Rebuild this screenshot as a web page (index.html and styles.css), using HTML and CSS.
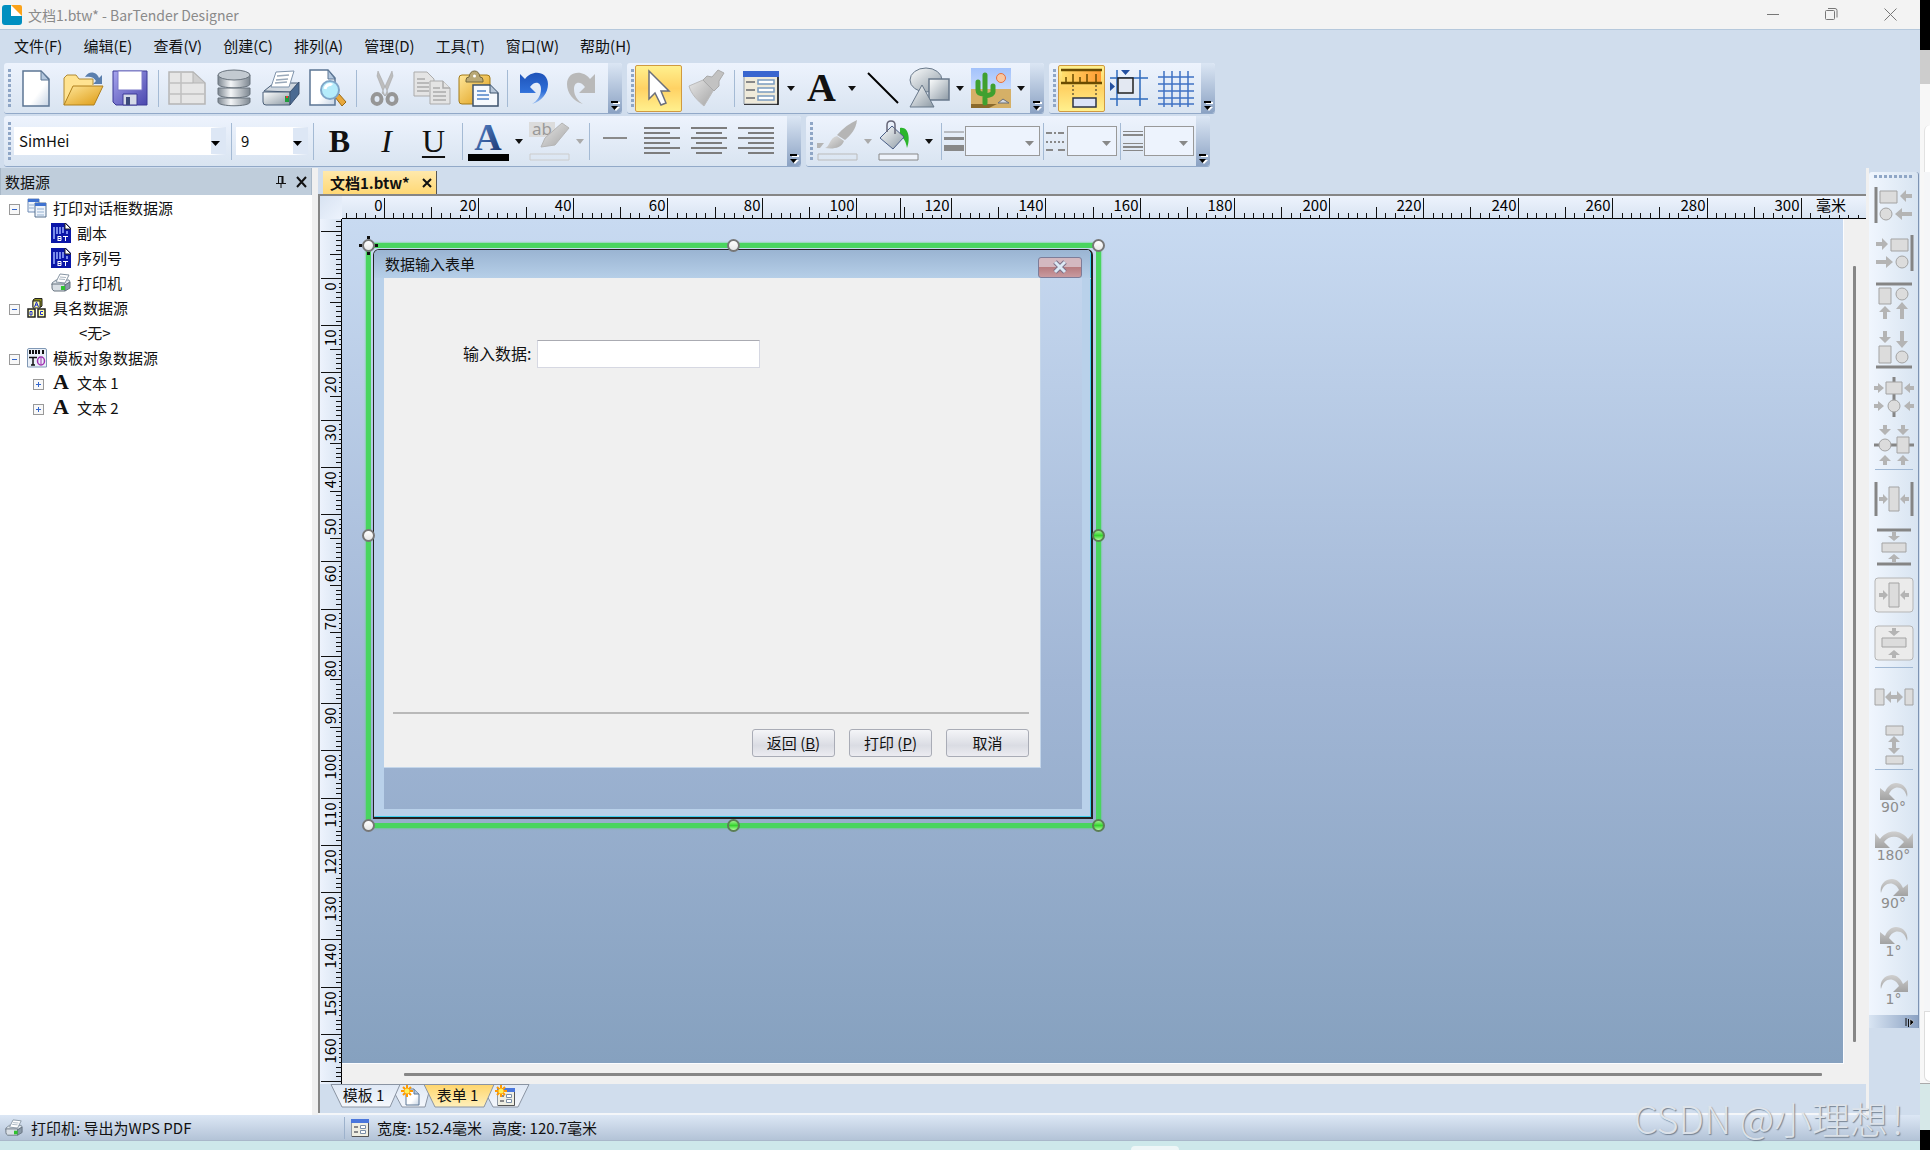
FILE: index.html
```html
<!DOCTYPE html>
<html lang="zh-CN">
<head>
<meta charset="utf-8">
<title>文档1.btw* - BarTender Designer</title>
<link rel="stylesheet" href="styles.css">
</head>
<body>
<svg class="defs" aria-hidden="true">
  <defs>
    <linearGradient id="g-steel" x1="0" y1="0" x2="1" y2="1"><stop offset="0" stop-color="#fdfefe"/><stop offset="1" stop-color="#8d9aa5"/></linearGradient>
    <linearGradient id="g-steelh"><stop offset="0" stop-color="#7d8791"/><stop offset=".4" stop-color="#f4f6f8"/><stop offset="1" stop-color="#7d8791"/></linearGradient>
    <linearGradient id="g-page" x1="0" y1="0" x2="1" y2="1"><stop offset="0" stop-color="#fff"/><stop offset=".6" stop-color="#fff"/><stop offset="1" stop-color="#c5d3e4"/></linearGradient>
    <linearGradient id="g-gold" x1="0" y1="0" x2="1" y2="1"><stop offset="0" stop-color="#ffe79a"/><stop offset="1" stop-color="#dd9a12"/></linearGradient>
    <linearGradient id="g-grey" x1="0" y1="0" x2="1" y2="1"><stop offset="0" stop-color="#e6e6e6"/><stop offset="1" stop-color="#a6a6a6"/></linearGradient>
    <linearGradient id="g-rot" x1="0" y1="0" x2="0" y2="1"><stop offset="0" stop-color="#cfcfcf"/><stop offset="1" stop-color="#a2a2a2"/></linearGradient>
    <linearGradient id="g-blue" x1="0" y1="0" x2="0" y2="1"><stop offset="0" stop-color="#1d52b8"/><stop offset=".6" stop-color="#2f6fd8"/><stop offset="1" stop-color="#9cc0f2"/></linearGradient>
    <linearGradient id="g-violet" x1="0" y1="0" x2="1" y2="1"><stop offset="0" stop-color="#a7a5ee"/><stop offset="1" stop-color="#4a47ae"/></linearGradient>
    <linearGradient id="g-letter" x1="0" y1="0" x2="1" y2="1"><stop offset="0" stop-color="#5f8fd8"/><stop offset="1" stop-color="#142f66"/></linearGradient>
    <linearGradient id="g-ruler"><stop offset="0" stop-color="#ffdf6c"/><stop offset="1" stop-color="#ff9a32"/></linearGradient>
    <linearGradient id="g-tab" x1="0" y1="0" x2="0" y2="1"><stop offset="0" stop-color="#dfe8f5"/><stop offset="1" stop-color="#f4f7fc"/></linearGradient>
    <linearGradient id="g-tabon" x1="0" y1="0" x2="0" y2="1"><stop offset="0" stop-color="#ffd56c"/><stop offset="1" stop-color="#fff0bb"/></linearGradient>
    <linearGradient id="g-sky" x1="0" y1="0" x2="0" y2="1"><stop offset="0" stop-color="#a3c2fb"/><stop offset="1" stop-color="#e5eefe"/></linearGradient>
    <symbol id="caret" viewBox="0 0 8 5"><path d="M0 0h8L4 5z" fill="currentColor"/></symbol>
    <symbol id="more" viewBox="0 0 10 10"><path d="M3 2h7M3 2h7" stroke="#fff" stroke-width="2"/><path d="M1 1h7" stroke="#000" stroke-width="2"/><path d="M2 6h8l-4 4z" fill="#fff"/><path d="M1 5h7L4.500 9z"/></symbol>
    <symbol id="printer" viewBox="0 0 38 38"><path d="M2 22 12 14h24l-7 9z" fill="#cfd6de" stroke="#4b5f78"/><path d="M9 18 14 3l18-1-5 16z" fill="#fff" stroke="#7f93ab"/><path d="M15 7l12-1M14 11l12-1M13 14l12-1" stroke="#9aa9ba" stroke-width="1.500"/><path d="M1 23h27v13H4q-3 0-3-3z" fill="url(#g-steel)" stroke="#4b5f78"/><path d="M28 23l9-10v12l-9 11z" fill="#4a6a92" stroke="#3c5270"/><path d="M23 27h4v6h-4z" fill="#1f9c3c"/><path d="M24 27h2v2h-2z" fill="#e33"/></symbol>
    <symbol id="printer-small" viewBox="0 0 20 20"><path d="M1 10l4-3h13l1 2-5 3H1z" fill="#dfe5ea" stroke="#7d8b98"/><path d="M5 9l4-8 9 1-4 8z" fill="#fff" stroke="#8795a3"/><path d="M9 4l6 .5M8 6l6 .5" stroke="#a9b5c1"/><path d="M1 11h13v7H3q-2-1-2-3z" fill="#d9dfe5" stroke="#66737f"/><path d="M14 12l5-3v6l-5 3z" fill="#8a99a8" stroke="#66737f"/><path d="M10 13h4v4h-4z" fill="#2fc32f"/></symbol>
    <symbol id="form" viewBox="0 0 36 34"><path d="M1 1h34v32H1z" fill="#efeada" stroke="#8f98a4"/><path d="M0 0h36v6H0z" fill="#3a66cf"/><path d="M35 6v28H1" fill="none" stroke="#111" stroke-width="1.500"/><g fill="#fff" stroke="#7b9cc0" stroke-width="1.500"><path d="M15 9h16v4H15zM15 17h16v4H15zM15 25h16v4H15z"/></g><path d="M3 11h9M3 19h9M3 27h9" stroke="#888" stroke-width="2"/></symbol>
    <symbol id="form-small" viewBox="0 0 18 18"><path d="M.5.5h17v17H.5z" fill="#efeee2" stroke="#8f98a4"/><path d="M0 0h18v4H0z" fill="#4a76dc"/><path d="M17.500 4v13.500H1" fill="none" stroke="#555"/><path d="M9.500 6.500h5v3h-5zM9.500 11.500h5v3h-5z" fill="#fff" stroke="#7b8fa8"/><path d="M3 8h4M3 13h4" stroke="#888" stroke-width="2"/></symbol>
    <symbol id="barcode" viewBox="0 0 20 20"><path d="M0 0h15l5 5v15H0z" fill="#0a16a8"/><path d="M14 0l6 6h-6z" fill="#fff" stroke="#222"/><path d="M3 4v12M6 4v7M9 4v7M12 4v6M16 8v3" stroke="#9fb2ff" stroke-width="1.500"/><path d="M7 13v5M7 13.500h3v4H7M7 15.500h3M12 13.500h5M14.500 13v5" stroke="#fff" fill="none"/></symbol>
    <symbol id="rot" viewBox="0 0 28 17"><path d="M0 5v12h15l-6-6C13 2 24 2 27 14 29 5 22 0 16 0 11 0 7 4 5 9z" fill="url(#g-rot)"/></symbol>
    <symbol id="spark" viewBox="0 0 12 12"><path d="M6 0v12M0 6h12M2 2l8 8M10 2l-8 8" stroke="#ff9a00" stroke-width="2"/><circle cx="6" cy="6" r="2.500" fill="#fff15a"/></symbol>
  </defs>
</svg>

<div class="app">
  <header class="titlebar">
    <svg class="logo" viewBox="0 0 20 20" width="20" height="20"><path d="M3 0h6v11h11v6q0 3-3 3H3q-3 0-3-3V3q0-3 3-3z" fill="#008fc0"/><path d="M9 0v11h11z" fill="#fff"/><path d="M9 0h9q2 0 2 2v9z" fill="#fba31a"/></svg>
    <h1>文档1.btw* - BarTender Designer</h1>
    <div class="winbuttons">
      <button aria-label="最小化"><svg width="12" height="12"><path d="M0 5.500h12" stroke="#777"/></svg></button>
      <button aria-label="还原"><svg width="13" height="13" fill="none" stroke="#777"><rect x=".5" y="2.500" width="9" height="9" rx="1"/><path d="M3 .5h7q2 0 2 2v7"/></svg></button>
      <button aria-label="关闭"><svg width="13" height="13"><path d="M.5.5l12 12M12.500.5l-12 12" stroke="#777"/></svg></button>
    </div>
  </header>

  <nav class="menubar">
    <button>文件(F)</button><button>编辑(E)</button><button>查看(V)</button><button>创建(C)</button><button>排列(A)</button><button>管理(D)</button><button>工具(T)</button><button>窗口(W)</button><button>帮助(H)</button>
  </nav>

  <div class="toolbars">
    <div class="toolrow">
      <div class="toolband">
        <i class="grip"></i>
        <button class="tool" aria-label="新建"><svg width="30" height="37"><path d="M2 1h18l8 8v27H2z" fill="url(#g-page)" stroke="#5c7694" stroke-width="1.500"/><path d="M20 1v9h8z" fill="#b4c8df" stroke="#5c7694"/></svg></button>
        <button class="tool" aria-label="打开"><svg width="42" height="37"><path d="M23 7c4-7 12-5 14 1l3-3v9h-9l3-3c-2-4-6-5-11-4z" fill="#5a7fae"/><path d="M2 35V8l3-3h9l3 4h14v6" fill="#ffe391" stroke="#b08a35"/><path d="M2 35 11 16h30L32 35z" fill="url(#g-gold)" stroke="#b0801c"/></svg></button>
        <button class="tool" aria-label="保存"><svg width="36" height="36"><path d="M1 1h34v34H4l-3-3z" fill="url(#g-violet)" stroke="#3c3a96"/><path d="M6 1h24v19H6z" fill="#fff" stroke="#7a78c8"/><path d="M11 24h14v11H11z" fill="#d5dae8" stroke="#3c3a96"/><path d="M14 27h4v8h-4z" fill="#3c4a7a"/></svg></button>
        <i class="sep"></i>
        <button class="tool" aria-label="页面设置"><svg width="38" height="36"><path d="M1 2h24l12 11v21H1z" fill="#e6e6e6" stroke="#b5b5b5" stroke-width="1.500"/><path d="M1 13h24M1 24h36M13 2v32" stroke="#c0c0c0" stroke-width="1.500"/><path d="M25 2v11h12z" fill="#cfcfcf" stroke="#b5b5b5"/></svg></button>
        <button class="tool" aria-label="数据库"><svg width="34" height="38" fill="url(#g-steelh)" stroke="#69737d"><path d="M1 29v4c0 5 32 5 32 0v-4zM1 19v6c0 5 32 5 32 0v-6z"/><path d="M1 6v9c0 5 32 5 32 0V6z"/><ellipse cx="17" cy="6" rx="16" ry="5" fill="#c3cad1"/></svg></button>
        <button class="tool" aria-label="打印"><svg width="38" height="38"><use href="#printer"/></svg></button>
        <button class="tool" aria-label="打印预览"><svg width="39" height="38"><path d="M2 1h18l7 8v27H2z" fill="url(#g-page)" stroke="#5c7694" stroke-width="1.500"/><path d="M20 1v9h7z" fill="#b4c8df" stroke="#5c7694"/><path d="M27 28l4-3 7 8-4 4z" fill="#e8a83c" stroke="#9c6a14"/><circle cx="22" cy="21" r="9" fill="#b5ecfb" stroke="#7fa6c8" stroke-width="2"/><path d="M17 20c1-5 6-5 7-4" stroke="#fff" stroke-width="3" fill="none"/></svg></button>
        <i class="sep"></i>
        <button class="tool" aria-label="剪切"><svg width="30" height="36"><path d="M8 1l10 22-3 3L7 6zM22 1L12 23l3 3 8-20z" fill="#bdbdbd" stroke="#a0a0a0" stroke-width=".5"/><g fill="none" stroke="#969696" stroke-width="4"><ellipse cx="7" cy="29" rx="4.500" ry="5"/><ellipse cx="22" cy="29" rx="4.500" ry="5"/></g></svg></button>
        <button class="tool" aria-label="复制"><svg width="38" height="34" fill="#e4e4e4" stroke="#ababab"><path d="M1 1h13l7 7v17H1z"/><path d="M4 8h8M4 12h12M4 16h12M4 20h12" stroke-width="1.500"/><path d="M17 10h13l7 7v16H17z"/><path d="M30 10v7h7M20 17h7M20 21h13M20 25h13M20 29h13" stroke-width="1.500"/></svg></button>
        <button class="tool" aria-label="粘贴"><svg width="41" height="37"><rect x="1" y="5" width="31" height="29" rx="3" fill="url(#g-gold)" stroke="#a27a19"/><path d="M8 10q0-3 3-3 1-6 5.500-6T22 7q3 0 3 3v2H8z" fill="#b9a875" stroke="#75683b"/><circle cx="16.500" cy="6" r="1.500" fill="#fff"/><path d="M15 15h17l8 8v13H15z" fill="#f6f9fd" stroke="#3d526c" stroke-width="1.500"/><path d="M32 15v8h8" fill="#b7c6d8" stroke="#3d526c"/><path d="M19 21h9M19 25h12M19 29h12" stroke="#4f83c8" stroke-width="1.500"/></svg></button>
        <i class="sep sep-tight"></i>
        <button class="tool" aria-label="撤消"><svg width="32" height="34"><path d="M2 3v19h16l-6-6c4-6 11-6 11 2 0 7-4 12-9 15 10-3 16-11 16-20C30 0 14-2 7 8z" fill="url(#g-blue)"/></svg></button>
        <button class="tool" aria-label="恢复"><svg width="32" height="34"><path d="M30 3v19H14l6-6C16 10 9 10 9 18c0 7 4 12 9 15C8 30 2 22 2 13 2 0 18-2 25 8z" fill="#b9b9b9"/></svg></button>
        <button class="overflow overflow-gap" aria-label="更多"><svg width="10" height="10"><use href="#more"/></svg></button>
      </div>
      <div class="toolband">
        <i class="grip"></i>
        <button class="tool on" aria-label="选择"><svg width="24" height="40"><path d="M2 3v28l6-6 6 12 5-2-5-12h8z" fill="#fff" stroke="#6b6f7c" stroke-width="1.500"/></svg></button>
        <button class="tool" aria-label="格式刷"><svg width="36" height="38"><path d="M1 17l14-6 10 11-9 15C10 32 3 25 1 17z" fill="url(#g-grey)" stroke="#bbb"/><path d="M15 11l4-4 5 1 6-7 6 3-5 8v5l-5 5z" fill="#c2c2c2" stroke="#aaa"/></svg></button>
        <i class="sep sep-tight"></i>
        <button class="tool" aria-label="窗体控件"><svg width="36" height="34"><use href="#form"/></svg></button>
        <button class="drop" aria-label="窗体控件选项"><svg width="8" height="5"><use href="#caret"/></svg></button>
        <button class="tool glyph-a" aria-label="文本">A</button>
        <button class="drop" aria-label="文本选项"><svg width="8" height="5"><use href="#caret"/></svg></button>
        <button class="tool" aria-label="线条"><svg width="32" height="32"><path d="M1 1l30 30" stroke="#000" stroke-width="2"/></svg></button>
        <button class="tool" aria-label="形状"><svg width="42" height="42" fill="url(#g-steel)" stroke="#68788a"><ellipse cx="17" cy="13" rx="16" ry="12"/><path d="M20 12h20v21H20z" stroke-width="1.500"/><path d="M13 18l12 22H1z"/></svg></button>
        <button class="drop" aria-label="形状选项"><svg width="8" height="5"><use href="#caret"/></svg></button>
        <button class="tool" aria-label="图片"><svg width="40" height="40"><path d="M0 0h40v40H0z" fill="url(#g-sky)"/><path d="M0 21h40v19H0z" fill="#d5b067"/><path d="M0 36h26l-8 4H0z" fill="#8a6a2c"/><circle cx="30" cy="10" r="4.500" fill="#f9c7a0" stroke="#e8703c"/><path d="M7 14v8q0 4 6 4M22 18v6q0 3-8 4M14 7v28" stroke="#3fa02f" stroke-width="5" fill="none" stroke-linecap="round"/><path d="M27 35l5-4 6 4z" fill="#d5d9e0" stroke="#6b6f77"/></svg></button>
        <button class="drop" aria-label="图片选项"><svg width="8" height="5"><use href="#caret"/></svg></button>
        <button class="overflow" aria-label="更多"><svg width="10" height="10"><use href="#more"/></svg></button>
      </div>
      <div class="toolband">
        <i class="grip grip-tight"></i>
        <button class="tool on" aria-label="标尺"><svg width="41" height="40"><path d="M1 1h39v15H1z" fill="url(#g-ruler)"/><path d="M0 2h41M0 15h41" stroke="#6a4b00" stroke-width="2.500"/><path d="M5 14V9M12 14V6M19 14V9M26 14V6M35 14V6" stroke="#6a4b00" stroke-width="1.500"/><path d="M12 17v12M35 17v12" stroke="#222" stroke-dasharray="2 2"/><path d="M12 30h23v9H12z" fill="#dce4f8" stroke="#2b3346" stroke-width="1.500"/></svg></button>
        <button class="tool" aria-label="对齐网格"><svg width="38" height="38" fill="none"><path d="M0 9h38M0 30h38M7 1v36M30 1v36" stroke="#2f6bbd" stroke-width="1.500"/><path d="M8 9h15v15H8z" fill="#e3e8f2" stroke="#222" stroke-width="1.500"/><path d="M11 1h9l-4.500 5zM0 13v9l5-4.500z" fill="#2450a0"/></svg></button>
        <button class="tool" aria-label="网格"><svg width="38" height="38"><path d="M1 8h36M1 15h36M1 22h36M1 29h36M1 35h36M7 2v36M15 2v36M23 2v36M31 2v36" stroke="#3f72c4" stroke-width="1.500"/></svg></button>
        <button class="overflow" aria-label="更多"><svg width="10" height="10"><use href="#more"/></svg></button>
      </div>
    </div>

    <div class="toolrow">
      <div class="toolband">
        <i class="grip"></i>
        <span class="combo combo-font"><select aria-label="字体"><option>SimHei</option></select></span>
        <i class="sep"></i>
        <span class="combo combo-size"><select aria-label="字号"><option>9</option></select></span>
        <i class="sep sep-tight"></i>
        <button class="tool glyph-b" aria-label="粗体">B</button>
        <button class="tool glyph-i" aria-label="斜体">I</button>
        <button class="tool glyph-u" aria-label="下划线">U</button>
        <i class="sep sep-tight"></i>
        <button class="tool" aria-label="字体颜色"><svg width="41" height="42"><text x="20" y="30" text-anchor="middle" class="letter" fill="url(#g-letter)">A</text><path d="M0 34h41v7H0z"/></svg></button>
        <button class="drop" aria-label="字体颜色选项"><svg width="8" height="5"><use href="#caret"/></svg></button>
        <button class="tool" aria-label="突出显示"><svg width="41" height="42"><path d="M0 2h26v15H0z" fill="#dcdcdc"/><text x="3" y="15" class="hl" fill="#999">ab</text><path d="M12 27l4-9L33 3l7 5-14 17z" fill="url(#g-grey)" stroke="#b5b5b5"/><path d="M1 34h39v6H1z" fill="none" stroke="#ccc"/></svg></button>
        <button class="drop dim" aria-label="突出显示选项"><svg width="8" height="5"><use href="#caret"/></svg></button>
        <i class="sep sep-thin"></i>
        <button class="tool" aria-label="单行"><svg width="24" height="34"><path d="M0 14h24" stroke="#8a8a8a" stroke-width="2"/></svg></button>
        <button class="tool" aria-label="左对齐"><svg width="36" height="30" stroke="#7d7d7d" stroke-width="2"><path d="M0 2h36M0 7h26M0 12h36M0 17h26M0 22h36M0 27h26"/></svg></button>
        <button class="tool" aria-label="居中"><svg width="36" height="30" stroke="#7d7d7d" stroke-width="2"><path d="M0 2h36M5 7h26M0 12h36M5 17h26M0 22h36M5 27h26"/></svg></button>
        <button class="tool" aria-label="右对齐"><svg width="36" height="30" stroke="#7d7d7d" stroke-width="2"><path d="M0 2h36M10 7h26M0 12h36M10 17h26M0 22h36M10 27h26"/></svg></button>
        <button class="overflow overflow-wide" aria-label="更多"><svg width="10" height="10"><use href="#more"/></svg></button>
      </div>
      <div class="toolband">
        <i class="grip"></i>
        <button class="tool" aria-label="线条颜色"><svg width="41" height="42"><path d="M8 28c5-1 4-10 12-12l7 5c-3 8-12 8-19 7z" fill="url(#g-grey)"/><path d="M20 15C26 8 33 3 40 0c-1 9-6 15-12 20z" fill="#b5b5b5"/><path d="M1 34h39v6H1z" fill="none" stroke="#bbb"/><path d="M0 23h7l-4 5H0z" fill="#b5b5b5"/></svg></button>
        <button class="drop dim" aria-label="线条颜色选项"><svg width="8" height="5"><use href="#caret"/></svg></button>
        <button class="tool" aria-label="填充颜色"><svg width="41" height="42"><path d="M22 8c8-2 11 10 7 20-1-6-3-10-7-12z" fill="#2bb52b"/><path d="M2 18 14 6l12 11-11 12z" fill="url(#g-steel)" stroke="#4a5e86"/><path d="M9 12V5q0-4 4-4t4 4v9" fill="none" stroke="#667" stroke-width="1.500"/><path d="M1 34h39v6H1z" fill="#eef3fb" stroke="#888"/></svg></button>
        <button class="drop" aria-label="填充颜色选项"><svg width="8" height="5"><use href="#caret"/></svg></button>
        <i class="sep sep-tight"></i>
        <label class="combo combo-line"><svg width="20" height="22"><path d="M0 2h20" stroke="#888"/><path d="M0 8.500h20" stroke="#888" stroke-width="3"/><path d="M0 18h20" stroke="#888" stroke-width="6"/></svg><select class="w-wide" aria-label="线条粗细"><option></option></select></label>
        <i class="sep sep-small"></i>
        <label class="combo combo-line"><svg width="20" height="22" stroke="#888" stroke-width="2"><path d="M0 3h20" stroke-dasharray="6 2 2 2"/><path d="M0 12h20" stroke-dasharray="2 2"/><path d="M0 20h20" stroke-dasharray="7 5"/></svg><select aria-label="线条样式"><option></option></select></label>
        <i class="sep sep-small"></i>
        <label class="combo combo-line"><svg width="20" height="22" stroke="#888"><path d="M0 1.500h20M0 13.500h20M0 20.500h20"/><path d="M0 5h20M0 17h20" stroke-width="2"/></svg><select aria-label="复合类型"><option></option></select></label>
        <button class="overflow" aria-label="更多"><svg width="10" height="10"><use href="#more"/></svg></button>
      </div>
    </div>
  </div>

  <main class="main">
    <aside class="panel">
      <header class="panel-head">
        <h2>数据源</h2>
        <button aria-label="固定"><svg width="10" height="12" stroke="#111" fill="none"><path d="M2.500 0v7M2 .5h5M0 7.500h10M5 8v4"/><path d="M6.500 0v7" stroke-width="2"/></svg></button>
        <button aria-label="关闭"><svg width="11" height="10"><path d="M1 0l9 10M10 0L1 10" stroke="#111" stroke-width="2"/></svg></button>
      </header>
      <ul class="tree">
        <li><button class="exp open" aria-label="折叠"></button><svg width="20" height="20" viewBox="0 0 20 20"><path d="M1 1h11v13H1z" fill="#eef4fc" stroke="#6f8bb4"/><path d="M1 1h11v3H1z" fill="#3f72d0"/><path d="M8 5h11v14H8z" fill="#eef4fc" stroke="#56708f"/><path d="M8 5h11v3H8z" fill="#3f72d0"/><path d="M10 11h7M10 14h7M10 17h7M2 7h5M2 10h5" stroke="#94b0d0"/></svg>打印对话框数据源
          <ul>
            <li><svg width="20" height="20"><use href="#barcode"/></svg>副本</li>
            <li><svg width="20" height="20"><use href="#barcode"/></svg>序列号</li>
            <li><svg width="20" height="20"><use href="#printer-small"/></svg>打印机</li>
          </ul>
        </li>
        <li><button class="exp open" aria-label="折叠"></button><svg width="20" height="20" viewBox="0 0 20 20"><path d="M6 2l2-1.500h7V8l-1 1H6z" fill="#8d8d1d" stroke="#222"/><path d="M6 3h7v7H6z" fill="#ffffa8" stroke="#222"/><path d="M1 11h7v8H1zM11 11h7v8h-7z" fill="#ffffa8" stroke="#222" stroke-width="1.500"/><path d="M7.500 9l2-5 2 5M8 7h3M3 13.500h2v3.500H3zM16 13.500h-2.500v3H16" stroke="#1a2ad0" fill="none"/></svg>具名数据源
          <ul><li class="none">&lt;无&gt;</li></ul>
        </li>
        <li><button class="exp open" aria-label="折叠"></button><svg width="20" height="20" viewBox="0 0 20 20"><path d="M.5 2q0-1.500 1.500-1.500h16q1.500 0 1.500 1.500v17H.5z" fill="#eaf0f8" stroke="#8098b5"/><path d="M3 2v4M6 2v4M9 2v4M12 2v4M16 2v4" stroke="#111" stroke-width="2"/><path d="M2 9.500h8M6 9v8M4 17h4" stroke="#111" stroke-width="1.500"/><ellipse cx="14" cy="13" rx="3.500" ry="4" fill="none" stroke="#a030b0" stroke-width="1.500"/><path d="M14 10v6" stroke="#a030b0"/></svg>模板对象数据源
          <ul>
            <li class="leaf"><button class="exp" aria-label="展开"></button><b class="leaf-a">A</b>文本 1</li>
            <li class="leaf"><button class="exp" aria-label="展开"></button><b class="leaf-a">A</b>文本 2</li>
          </ul>
        </li>
      </ul>
    </aside>

    <section class="workspace">
      <div class="doctabs">
        <div class="doctab"><span>文档1.btw*</span><button aria-label="关闭文档"><svg width="10" height="10"><path d="M1 1l8 8M9 1L1 9" stroke="#111" stroke-width="2"/></svg></button></div>
      </div>
      <div class="editor">
        <div class="corner"></div>
        <svg class="ruler ruler-h" id="ruler-h"></svg>
        <svg class="ruler ruler-v" id="ruler-v"></svg>
        <div class="canvas">
          <div class="selection">
            <div class="form-window">
              <header class="form-title"><span>数据输入表单</span><button class="form-close" aria-label="关闭表单"><svg width="14" height="12"><path d="M2 1l10 10M12 1L2 11" stroke="#7c6f86" stroke-width="5"/><path d="M2 1l10 10M12 1L2 11" stroke="#dbe9f5" stroke-width="3"/></svg></button></header>
              <div class="form-client">
                <form class="form-body">
                  <div class="field"><label for="data">输入数据:</label><input id="data" type="text"></div>
                  <div class="actions">
                    <button type="button">返回 (<u>B</u>)</button>
                    <button type="button">打印 (<u>P</u>)</button>
                    <button type="button">取消</button>
                  </div>
                </form>
              </div>
            </div>
            <i class="handle anchor tl"></i><i class="handle tc"></i><i class="handle tr"></i>
            <i class="handle ml"></i><i class="handle green mr"></i>
            <i class="handle bl"></i><i class="handle green bc"></i><i class="handle green br"></i>
          </div>
        </div>
        <div class="vscroll"><i></i></div>
        <div class="hscroll"><i></i></div>
      </div>
      <div class="sheets">
        <svg class="sheets-shape" width="220" height="25" stroke="#8a94a3">
          <path d="M166 .5h43l-11 22.500h-25l-9-17z" fill="url(#g-tab)"/>
          <path d="M75 .5h36l-6 22.500H82l-7-13z" fill="url(#g-tab)"/>
          <path d="M11 .5h69L70 23H22z" fill="url(#g-tab)"/>
          <path d="M104 .5h70L164 23h-49z" fill="url(#g-tabon)"/>
        </svg>
        <button class="sheet">模板 1</button>
        <button class="sheet-new" aria-label="新建模板"><svg width="20" height="21"><path d="M5 4h8l5 5v11H5z" fill="url(#g-page)" stroke="#5c7694"/><path d="M13 4v5h5" fill="#b4c8df" stroke="#5c7694"/><use href="#spark" width="12" height="12"/></svg></button>
        <button class="sheet">表单 1</button>
        <button class="sheet-new" aria-label="新建表单"><svg width="20" height="21"><use href="#form-small" x="2" y="3" width="18" height="18"/><use href="#spark" width="12" height="12"/></svg></button>
      </div>
    </section>

    <aside class="side">
      <div class="sidebar">
        <i class="hgrip"></i>
        <button aria-label="左对齐对象"><svg width="40" height="36" class="al"><path class="bar" d="M2 0v36"/><path d="M6 4h17v12H6z"/><circle cx="12" cy="27" r="6"/><path class="ar" d="M38 7h-6V3l-6 6 6 6v-4h6zM38 25H28v-4l-7 6 7 6v-4h10z"/></svg></button>
        <button aria-label="右对齐对象"><svg width="40" height="36" class="al"><path class="bar" d="M38 0v36"/><path d="M17 4h17v12H17z"/><circle cx="28" cy="27" r="6"/><path class="ar" d="M2 7h6V3l6 6-6 6v-4H2zM2 25h10v-4l7 6-7 6v-4H2z"/></svg></button>
        <button aria-label="顶端对齐"><svg width="40" height="38" class="al"><path class="bar" d="M2 2h36"/><path d="M5 6h12v16H5z"/><circle cx="28" cy="12" r="6"/><path class="ar" d="M9 37v-7H5l6-6 6 6h-4v7zM26 37V27h-4l6-7 6 7h-4v10z"/></svg></button>
        <button aria-label="底端对齐"><svg width="40" height="38" class="al"><path class="bar" d="M2 37h36"/><path d="M5 16h12v17H5z"/><circle cx="28" cy="27" r="6"/><path class="ar" d="M9 1v6H5l6 6 6-6h-4V1zM26 1v10h-4l6 7 6-7h-4V1z"/></svg></button>
        <button aria-label="水平居中对齐"><svg width="40" height="40" class="al"><path class="bar" d="M20 0v40"/><path d="M12 5h16v12H12z"/><circle cx="20" cy="29" r="6"/><path class="ar" d="M0 9h4V6l6 5-6 5v-3H0zM40 9h-4V6l-6 5 6 5v-3h4zM0 27h4v-3l6 5-6 5v-3H0zM40 27h-4v-3l-6 5 6 5v-3h4z"/></svg></button>
        <button aria-label="垂直居中对齐"><svg width="40" height="40" class="al"><path class="bar" d="M0 20h40"/><path d="M23 12h12v16H23z"/><circle cx="11" cy="20" r="6"/><path class="ar" d="M9 0v4H5l6 6 6-6h-4V0zM27 0v4h-4l6 6 6-6h-4V0zM9 40v-4H5l6-6 6 6h-4v4zM27 40v-4h-4l6-6 6 6h-4v4z"/></svg></button>
        <i class="hsep"></i>
        <button aria-label="水平居中"><svg width="40" height="34" class="al"><path class="bar" d="M2 0v34M38 0v34"/><path d="M15 5h10v24H15z"/><path class="ar" d="M5 15h4v-3l5 5-5 5v-3H5zM35 15h-4v-3l-5 5 5 5v-3h4z"/></svg></button>
        <button aria-label="垂直居中"><svg width="40" height="38" class="al"><path class="bar" d="M3 2h34M3 36h34"/><path d="M8 15h24v9H8z"/><path class="ar" d="M18 4v4h-4l6 5 6-5h-4V4zM18 34v-3h-4l6-5 6 5h-4v3z"/></svg></button>
        <button aria-label="在模板中水平居中"><svg width="40" height="36" class="al"><rect class="box" x="1" y="1" width="38" height="34" rx="3"/><path d="M15 6h10v24H15z"/><path class="ar" d="M5 16h4v-3l5 5-5 5v-3H5zM35 16h-4v-3l-5 5 5 5v-3h4z"/></svg></button>
        <button aria-label="在模板中垂直居中"><svg width="40" height="36" class="al"><rect class="box" x="1" y="1" width="38" height="34" rx="3"/><path d="M8 13h24v9H8z"/><path class="ar" d="M18 3v3h-4l6 5 6-5h-4V3zM18 33v-3h-4l6-5 6 5h-4v3z"/></svg></button>
        <i class="hsep"></i>
        <button aria-label="水平等距"><svg width="40" height="18" class="al"><path d="M1 1h9v16H1zM31 1h8v16h-8z"/><path class="ar" d="M11 9l6-6v4h6V3l6 6-6 6v-4h-6v4z"/></svg></button>
        <button aria-label="垂直等距"><svg width="40" height="40" class="al"><path d="M12 1h17v9H12zM12 31h17v8H12z"/><path class="ar" d="M20 11l-6 6h4v6h-4l6 6 6-6h-4v-6h4z"/></svg></button>
        <i class="hsep"></i>
        <button class="rot"><svg width="28" height="17"><use href="#rot"/></svg>90°</button>
        <button class="rot"><svg width="38" height="17" viewBox="0 0 38 17"><path d="M0 2v15h15l-6-6c5-7 15-7 20 0l-6 6h15V2l-5 6C26-2 12-2 5 8z" fill="url(#g-rot)"/></svg>180°</button>
        <button class="rot"><svg width="28" height="17" class="flip"><use href="#rot"/></svg>90°</button>
        <button class="rot"><svg width="28" height="17"><use href="#rot"/></svg>1°</button>
        <button class="rot"><svg width="28" height="17" class="flip"><use href="#rot"/></svg>1°</button>
        <button class="side-more" aria-label="更多"><svg width="10" height="8"><path d="M1 0v8M3.500 1v8" stroke="#111"/><path d="M5 1l4 3-4 4z" stroke="#fff" stroke-width=".5"/></svg></button>
      </div>
    </aside>
  </main>

  <footer class="status">
    <span class="status-printer"><svg width="18" height="18"><use href="#printer-small"/></svg>打印机: 导出为WPS PDF</span>
    <span class="status-size"><svg width="18" height="18"><use href="#form-small"/></svg>宽度: 152.4毫米&nbsp;&nbsp; 高度: 120.7毫米</span>
  </footer>
  <div class="desktop"><i></i></div>
  <p class="watermark">CSDN @小理想！</p>
</div>

<div class="behind" aria-hidden="true">
  <i class="b-black"></i><i class="b-grey"></i><i class="b-head"></i><i class="b-white"></i><i class="b-page"></i><i class="b-card"></i><i class="b-wall"></i><i class="b-black-foot"></i>
</div>
<script src="ruler.js"></script>
</body>
</html>
```
FILE: styles.css
```css
* { box-sizing: border-box; }
body {
  margin: 0;
  min-height: 100vh;
  display: flex;
  background: #d0dded;
  color: #111;
  font: 15px/20px "Noto Sans CJK SC", "Noto Sans", sans-serif;
}
h1, h2, p, ul { margin: 0; padding: 0; font: inherit; }
button, select, input { font: inherit; color: inherit; margin: 0; padding: 0; border: 0; background: none; border-radius: 0; }
svg { display: block; flex: none; overflow: visible; }
i { display: block; flex: none; }
.defs { position: absolute; width: 0; height: 0; overflow: hidden; }

.app { flex: 1; min-width: 0; display: flex; flex-direction: column; position: relative; }

/* title and menu */
.titlebar { display: flex; align-items: center; gap: 6px; height: 30px; padding-left: 2px; background: #f3f3f3; border-bottom: 1px solid #b5c8dc; color: #8a8a8a; font-size: 14px; }
.winbuttons { display: flex; margin-left: auto; }
.winbuttons button { width: 58px; height: 28px; display: grid; place-items: center; }
.winbuttons button:last-child { width: 60px; }
.menubar { display: flex; gap: 21px; padding: 6px 14px 0; height: 33px; }
.menubar button { height: 20px; line-height: 20px; }

/* tool bars */
.toolbars { display: flex; flex-direction: column; gap: 2px; padding-bottom: 1px; }
.toolrow { display: flex; gap: 5px; padding-left: 4px; height: 51px; }
.toolband { display: flex; align-items: center; background: linear-gradient(#edf3fd, #d9e4f1); border-bottom: 1px solid #92a9c8; border-radius: 3px; }
.grip { width: 3px; height: 38px; margin: 0 1px 0 4px; background: repeating-linear-gradient(#8fa6c6 0 3px, transparent 3px 5px); }
.grip-tight { margin-right: 2px; }
.sep { width: 10px; height: 37px; background: linear-gradient(90deg, transparent 5px, #a4bad4 5px 6px, transparent 6px); }
.sep-tight { width: 8px; }
.sep-small { width: 6px; background: linear-gradient(90deg, transparent 3px, #a4bad4 3px 4px, transparent 4px); }
.sep-thin { width: 4px; background: linear-gradient(90deg, transparent 2px, #a4bad4 2px 3px, transparent 3px); }
.tool { width: 47px; height: 47px; display: grid; place-items: center; flex: none; }
.tool.on { background: linear-gradient(#fff08e, #ffd264 50%, #fff08e); border: 1px solid #d09a40; border-radius: 2px; }
.drop { width: 14px; height: 47px; display: grid; place-items: center; color: #111; }
.dim { color: #aaa; }
.overflow { width: 14px; height: 50px; margin-left: 2px; display: grid; align-items: end; padding: 0 0 2px 2px; background: linear-gradient(#dbe6f4, #8ba2c3); border-radius: 0 3px 3px 0; }
.overflow-gap { margin-left: 4px; }
.overflow-wide { margin-left: 8px; }
.glyph-a, .glyph-b, .glyph-i, .glyph-u { font: bold 32px/40px "Liberation Serif", serif; }
.glyph-a { font-size: 40px; }
.glyph-i { font-weight: normal; font-style: italic; }
.glyph-u { font-weight: normal; text-decoration: underline; text-underline-offset: 4px; text-decoration-thickness: 2px; }
.letter { font: bold 38px "Liberation Serif", serif; }
.hl { font: 17px "Noto Sans", sans-serif; }

.combo { position: relative; display: flex; align-items: center; }
.combo select { appearance: none; height: 28px; padding-left: 4px; width: 100%; background: #fff; }
.combo::after { content: ""; position: absolute; right: 6px; top: 50%; width: 9px; height: 5px; background: #000; clip-path: polygon(0 0, 100% 0, 50% 100%); }
.combo-font { width: 212px; margin-left: 2px; }
.combo-size { width: 72px; }
.combo-font select, .combo-size select { border: 1px solid #fff; border-right: 15px solid #dde7f5; }
.combo-line { gap: 1px; }
.combo-line select { width: 50px; height: 30px; border: 1px solid #999; background: #edf3fd; }
.combo-line .w-wide { width: 75px; }
.combo-line::after { background: #888; }

/* main area */
.main { flex: 1; display: flex; min-height: 0; }
.panel { width: 318px; border-right: 6px solid #f0f0f0; background: #fff; flex: none; }
.panel-head { display: flex; align-items: center; gap: 10px; height: 27px; padding: 0 4px; background: #bfcddb; border-right: 1px solid #a8b8c8; border-left: 1px solid #a8b8c8; }
.panel-head h2 { margin-right: auto; line-height: 20px; }
.tree, .tree ul { list-style: none; }
.tree li { line-height: 25px; padding-left: 9px; }
.tree li > svg, .tree .exp, .leaf-a { display: inline-block; }
.tree li > svg { margin-right: 6px; vertical-align: -4px; }
.exp { width: 11px; height: 11px; border: 1px solid #999; margin-right: 7px; background: linear-gradient(#36c, #36c) center / 5px 1px no-repeat, #f8f8f8; }
.exp:not(.open) { background: linear-gradient(#36c, #36c) center / 5px 1px no-repeat, linear-gradient(#36c, #36c) center / 1px 5px no-repeat, #f8f8f8; }
.tree ul li { padding-left: 42px; }
.tree ul .leaf { padding-left: 24px; }
.tree ul .none { padding-left: 70px; }
.leaf-a { font: bold 22px/20px "Liberation Serif", serif; width: 19px; margin: 0 5px 0 2px; }

.workspace { flex: 1; min-width: 0; display: flex; flex-direction: column; border-bottom: 2px solid #f4f6f9; }
.doctabs { height: 26px; padding: 3px 0 0 5px; display: flex; }
.doctab { display: flex; align-items: center; gap: 12px; width: 114px; height: 23px; padding-left: 7px; background: linear-gradient(#ffe9ac, #ffd875); border-right: 1px solid #555; font-weight: bold; white-space: nowrap; }
.editor { flex: 1; display: grid; grid-template: 23px 1fr 20px / 22px 1fr 22px; border-top: 2px solid #868686; border-left: 2px solid #868686; background: #f0f0f0; }
.corner { background: linear-gradient(135deg, #d8e3f2, #edf3fd); }
.ruler { width: 100%; height: 100%; min-width: 0; min-height: 0; font: 15px "Noto Sans CJK SC", sans-serif; }
.ruler path { stroke: #111; fill: none; }
.ruler-h { grid-area: 1 / 2 / 2 / 4; background: linear-gradient(#edf3fd, #d9e4f2); border-bottom: 1px solid #000; }
.ruler-v { grid-area: 2 / 1 / 4 / 2; background: linear-gradient(90deg, #edf3fd, #d9e4f2); border-right: 1px solid #000; }
.canvas { grid-area: 2 / 2; position: relative; background: linear-gradient(#c8daf1, #a1b6d5 55%, #86a1bf); border: solid #fbfcfe; border-width: 0 1px 1px 0; }
.vscroll { grid-area: 2 / 3; display: flex; padding: 47px 0 22px 9px; }
.vscroll i { width: 3px; background: #868686; border-radius: 1px; }
.hscroll { grid-area: 3 / 2 / 4 / 4; padding: 9px 44px 0 62px; }
.hscroll i { height: 3px; background: #868686; border-radius: 1px; }

/* form object on the canvas */
.selection { position: absolute; left: 24px; top: 24px; width: 735px; height: 585px; padding: 1px 3px 4px 2px; border: 5px solid #49d55f; box-shadow: 0 0 2px #49d55f; }
.form-window { height: 100%; display: flex; flex-direction: column; border: 1px solid #222; border-width: 1px 2px 2px 1px; border-radius: 6px 6px 0 0; overflow: hidden; }
.form-title { display: flex; align-items: center; height: 28px; padding: 0 8px 0 11px; background: linear-gradient(#9ab4d2, #b6cfe8); border-right: 1px solid #3fd0f0; }
.form-close { margin-left: auto; width: 44px; height: 21px; margin-top: 6px; display: grid; place-items: center; border: 1px solid #7d7d99; border-radius: 3px; background: linear-gradient(#d3b8c0 45%, #b77c80 50%, #c89a9f); }
.form-client { flex: 1; display: flex; margin: 0 1px 1px 0; padding: 0 41px 41px 0; border: solid #b9d1ea; border-width: 0 8px 7px 10px; box-shadow: 1px 1px 0 #3fd0f0; }
.form-body { flex: 1; display: flex; flex-direction: column; padding: 62px 11px 10px 9px; background: #f0f0f0; border-right: 1px solid #c4d6ea; border-bottom: 1px solid #c4d6ea; }
.field { display: flex; align-items: center; gap: 6px; padding-left: 70px; font-size: 16px; }
.field label { line-height: 20px; padding-bottom: 2px; }
.field input { width: 223px; height: 28px; background: #fff; border: 1px solid #d6d8e2; border-top-color: #aaabb2; padding: 0 4px; }
.actions { display: flex; justify-content: flex-end; gap: 14px; margin-top: auto; padding-top: 15px; border-top: 2px solid #b9b9b9; }
.actions button { width: 83px; height: 28px; font-size: 15px; line-height: 20px; border: 1px solid #a9acb6; border-radius: 3px; background: linear-gradient(#f4f5f8, #dadce3 60%, #ececf1); }
.handle { position: absolute; width: 13px; height: 13px; border: 2px solid #777; border-radius: 50%; background: linear-gradient(#fff, #e6e6e6); }
.green { background: linear-gradient(#9df08c, #35d42e 50%, #b0ff9a); border-color: #5b7f55; }
.tl, .tc, .tr { top: -9px; }
.ml, .mr { top: 281px; }
.bl, .bc, .br { bottom: -9px; }
.tl, .ml, .bl { left: -9px; }
.tc, .bc { left: 356px; }
.tr, .mr, .br { right: -9px; }
.anchor::before {
  content: ""; position: absolute; inset: -5px;
  background:
    linear-gradient(#111, #111) top / 3px 3px no-repeat,
    linear-gradient(#111, #111) bottom / 3px 3px no-repeat,
    linear-gradient(#111, #111) left / 3px 3px no-repeat,
    linear-gradient(#111, #111) right / 3px 3px no-repeat;
}

.sheets { position: relative; display: flex; align-items: center; height: 29px; padding: 0 0 7px 21px; border-left: 2px solid #868686; }
.sheets-shape { position: absolute; left: 0; top: 0; }
.sheet, .sheet-new { position: relative; height: 22px; line-height: 20px; flex: none; }
.sheet { width: 45px; white-space: nowrap; }
.sheet-new { width: 49px; display: grid; place-items: center; }

/* alignment tool bar */
.side { width: 54px; padding: 4px 1px 0 0; border-left: 3px solid #f0f0f0; flex: none; }
.sidebar { display: flex; flex-direction: column; align-items: center; background: linear-gradient(90deg, #f0f6fe, #d8e4f1); border-right: 1px solid #7d93b3; border-radius: 3px 3px 0 0; }
.sidebar button { width: 48px; height: 47px; display: grid; place-items: center; margin-bottom: 1px; }
.hgrip { width: 40px; height: 3px; margin: 3px 0; background: repeating-linear-gradient(90deg, #8fa6c6 0 3px, transparent 3px 5px); }
.hsep { width: 38px; height: 6px; border-top: 1px solid #a0b8d4; }
.al { fill: #dcdcdc; stroke: #a3a3a3; stroke-width: 1px; }
.al .bar { stroke: #858585; stroke-width: 3px; }
.al .ar { fill: #b4b4b4; stroke: none; }
.al .box { fill: #ebebeb; stroke: #b5b5b5; }
.sidebar .rot { font: 14px/14px "DejaVu Sans", sans-serif; color: #8d8d8d; align-content: center; }
.flip { transform: scaleX(-1); }
.sidebar .side-more { width: 100%; height: 13px; margin: 0; justify-items: end; padding-right: 3px; background: linear-gradient(90deg, #d9e5f3, #8ba2c3); }

/* status bar and what shows behind the window */
.status { display: flex; align-items: center; height: 26px; background: linear-gradient(#dce7f5, #b3c3d7); border-bottom: 1px solid #a9b8ca; }
.status span { display: flex; align-items: center; gap: 8px; white-space: nowrap; }
.status-printer { width: 344px; padding-left: 5px; }
.status-size { padding-left: 6px; border-left: 1px solid #9db2cc; height: 22px; }
.desktop { height: 9px; background: #cde8ea; display: flex; justify-content: center; padding: 5px 0 0 390px; }
.desktop i { width: 48px; height: 4px; border-radius: 4px 4px 0 0; background: #eef6f7; }
.watermark { position: absolute; right: -6px; bottom: 12px; font-size: 38px; font-weight: 300; line-height: 40px; color: #dfe4ea; opacity: 0.9; text-shadow: 1px 1px 1px #6f7c8c; white-space: nowrap; }
.behind { width: 10px; flex: none; display: flex; flex-direction: column; background: #f7f7f7; }
.b-black { height: 50px; background: #000; }
.b-grey { height: 34px; background: #cdcdcd; }
.b-head { height: 41px; }
.b-white { height: 47px; margin-left: 4px; background: #fff; border-left: 1px solid #e2e2e2; border-radius: 6px 0 0 0; }
.b-page { flex: 1; margin-left: 4px; background: #f5f6f8; }
.b-card { height: 71px; margin-left: 4px; background: #fff; border: solid #ddd; border-width: 1px 0 1px 1px; border-radius: 0 0 0 8px; }
.b-wall { height: 47px; margin-top: 1px; background: #d6e8e8; border-top: 1px solid #aaa; }
.b-black-foot { height: 20px; background: #000; }
```
FILE: ruler.js
```js
// Draws the millimetre rulers; 300 mm take up 1417 px.
const MM = 1417 / 300;
const NS = "http://www.w3.org/2000/svg";

function add(svg, name, attrs, text) {
  const el = document.createElementNS(NS, name);
  for (const key in attrs) el.setAttribute(key, attrs[key]);
  if (text) el.textContent = text;
  svg.appendChild(el);
}

function horizontal(svg) {
  const origin = 42;
  const width = svg.getBoundingClientRect().width;
  let d = "";
  for (let mm = -8; origin + mm * MM < width; mm += 2) {
    const x = Math.round(origin + mm * MM) + 0.5;
    const big = mm % 20 === 0 && mm <= 300;
    const toLabel = (20 - (((mm % 20) + 20) % 20)) % 20;
    const low = (toLabel > 0 && toLabel <= 4 && mm < 300 && mm > -3) || mm > 302;
    const top = big ? 2 : mm % 10 === 0 && mm < 300 ? 11 : low ? 19 : 17;
    d += `M${x} ${top}V23`;
    if (big) add(svg, "text", { x: x - 2, y: 15, "text-anchor": "end" }, String(mm));
  }
  d += "M558.5 2V23";
  add(svg, "path", { d });
  add(svg, "text", { x: 1474, y: 15 }, "毫米");
}

function vertical(svg) {
  const origin = 59;
  const height = svg.getBoundingClientRect().height;
  let d = "";
  for (let mm = -12; origin + mm * MM < height; mm += 1) {
    const y = Math.round(origin + mm * MM) + 0.5;
    const after = ((mm % 10) + 10) % 10;
    const covered = mm < 0 ? 0 : mm >= 100 ? 6 : mm >= 10 ? 4 : 2;
    let left = 16;
    if (after === 0) left = 1;
    else if (after <= covered) left = 19;
    else if (after === 5) left = 10;
    d += `M${left} ${y}H22`;
    if (after === 0 && mm >= 0 && mm < 170) {
      add(svg, "text", { transform: `translate(16 ${y + 4}) rotate(-90)`, "text-anchor": "end" }, String(mm));
    }
  }
  d += "M10 224.5H22";
  add(svg, "path", { d });
}

horizontal(document.getElementById("ruler-h"));
vertical(document.getElementById("ruler-v"));
```
